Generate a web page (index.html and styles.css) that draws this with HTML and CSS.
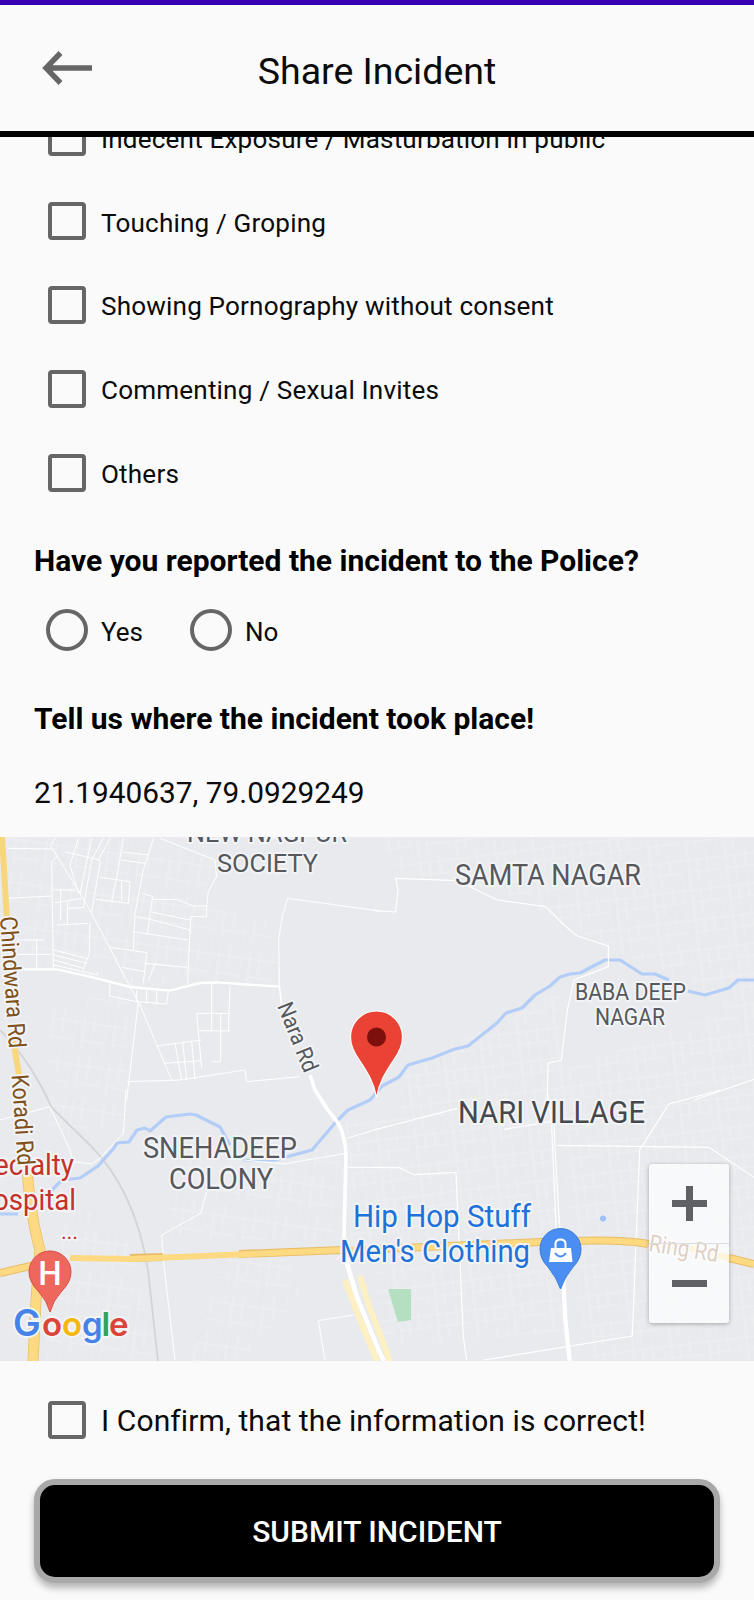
FILE: index.html
```html
<!DOCTYPE html>
<html lang="en">
<head>
<meta charset="utf-8">
<title>Share Incident</title>
<link rel="stylesheet" href="styles.css">
</head>
<body>
<header class="appbar">
  <svg class="back" viewBox="0 0 50 34" width="50" height="34"><path d="M50 17H4M18.500 2L4 17l14.500 15" fill="none" stroke="#666" stroke-width="5.400"/></svg>
  <h1 class="title"><span>Share Incident</span></h1>
</header>
<main class="form">
  <div class="options">
    <label class="row"><i class="box"></i><span>Indecent Exposure / Masturbation in public</span></label>
    <label class="row"><i class="box"></i><span>Touching / Groping</span></label>
    <label class="row"><i class="box"></i><span>Showing Pornography without consent</span></label>
    <label class="row"><i class="box"></i><span>Commenting / Sexual Invites</span></label>
    <label class="row"><i class="box"></i><span>Others</span></label>
  </div>
  <h2 class="question police">Have you reported the incident to the Police?</h2>
  <div class="radios">
    <label class="choice"><i class="dot"></i><span>Yes</span></label>
    <label class="choice"><i class="dot"></i><span>No</span></label>
  </div>
  <h2 class="question place">Tell us where the incident took place!</h2>
  <p class="coords">21.1940637, 79.0929249</p>
</main>
<section class="map">
<svg class="tiles" viewBox="0 837 754 524" width="754" height="524">
  <defs>
    <pattern id="g1" width="31" height="43" patternUnits="userSpaceOnUse" patternTransform="rotate(8)"><path d="M0 0V43M9 4V38M19 0V25M0 12H31M9 30H31" stroke="#f2f3f5" stroke-width=".9" fill="none"/></pattern>
    <pattern id="g2" width="38" height="30" patternUnits="userSpaceOnUse" patternTransform="rotate(-7)"><path d="M0 0V30M8 0V30M17 8V30M27 0V20M0 8H38M8 20H38" stroke="#f1f2f4" stroke-width=".9" fill="none"/></pattern>
  </defs>
  <rect y="837" width="754" height="524" fill="#e8eaed"/>
  <path fill="url(#g1)" opacity=".75" d="M0 837H215V870L200 900V985L130 990 50 965 0 970ZM200 905L280 925V985H195ZM50 1000L130 990 125 1120 50 1140ZM230 1130L340 1155 335 1240 170 1240 165 1180ZM60 1190L130 1245 155 1361H45ZM225 1260H290L300 1300 240 1361H190Z"/>
  <path fill="url(#g2)" opacity=".75" d="M380 837H754V1030L690 980 610 950 570 925 500 890 400 875ZM400 1070L560 990 565 1070 754 1000V1360H590L560 1130 400 1130ZM345 1120L550 1110 560 1230 350 1240ZM375 1265H555L565 1330 385 1350ZM575 1260H640V1330H580Z"/>
  <g fill="none" stroke="#fff" stroke-width="3" transform="translate(0 830) scale(.33333)">
    <path stroke-width="7" d="M62 418L170 418 270 440 390 471 510 482 600 459 650 457 838 470"/>
    <path stroke-width="5" d="M838 468L845 525"/><path d="M838 470L836 325 848 255 863 205 1140 243"/>
    <path stroke-width="3" d="M150 45L240 190 275 250 390 470 420 525 515 750M165 22L155 45M25 55L155 57M155 95L160 415M155 95L172 78M25 205L155 198M50 330H130M50 373H155M110 330V415"/>
    <path d="M235 25L210 105 235 190M275 25L240 190M310 25L275 90 250 230M195 65L290 88Q305 90 300 105L275 245M330 25L295 90M160 180H225M165 218L245 205M170 285L265 280M182 180V270M202 215V285M205 235L255 232M270 280L268 370 250 420M162 360L260 385M162 375L260 400M162 390L250 415M162 405L295 435 290 425"/>
    <path d="M370 25L350 145 335 215M300 142L390 155 385 220 287 208M365 150V215M460 25L430 120 405 250 400 360M367 66L445 75M363 90L435 100M428 190L458 200 442 312M410 260L440 265 570 300M450 245L570 270M455 208L530 208 580 228H620V260H572L563 460M400 305L565 330M330 352L440 368 430 460M365 412L435 425M465 400L445 452M435 400L560 412M480 25L645 90 650 140 625 185 620 230"/>
    <path d="M330 460L328 498 410 515M410 480V515L500 522 505 485M440 480V520M470 482V520M415 515L380 810M635 460L635 600M690 470L685 603M590 550H690M590 550L605 715M662 550V695H635M597 602L690 603M470 648L605 630M492 700L605 692M525 640L545 750M548 635L560 750M575 635L585 748M380 755L540 750 735 720 740 755 900 740"/>
  </g>
  <g fill="none" stroke="#fff" transform="translate(374 830) scale(.33333)">
    <path d="M0 242L65 246 72 180 65 145 250 152 370 210 515 230 570 285 610 318 703 348V410L600 450 580 540 562 690 522 700 520 810M960 810L1140 748" stroke-width="3.500"/>
  </g>
  <path d="M0 1030Q30 1060 52 1108L90 1145Q135 1190 148 1270L158 1361" fill="none" stroke="#d2d4d7" stroke-width="1.800"/>
  <g fill="none" stroke="#b2cdf7" stroke-width="3.200" stroke-linejoin="round">
    <path d="M0 1214H18M52 1190L62 1180 80 1178 98 1166 114 1148 117 1143 129 1142 137 1130 145 1128 150 1131 166 1117 190 1114 196 1115 220 1127 230 1145M243 1160H275L312 1150 335 1123 348 1110 370 1100 382 1086 399 1077 408 1065 432 1058 455 1049 468 1046 497 1023 506 1013 522 1008 535 995 550 986 560 977 570 974 580 973 605 960H620L642 974H655L669 980M688 991L705 995 729 988 738 980 754 980"/>
  </g>
  <path d="M608.500 946V967" stroke="#fff" stroke-width="1.200"/>
  <g fill="none" stroke="#fff" transform="translate(0 1090) scale(.33333)">
    <path stroke-width="11" d="M930 -45L945 0 980 55 1015 100Q1038 145 1038 200L1032 440Q1035 525 1070 620L1140 790"/>
    <path stroke-width="3" d="M150 50L210 180 220 215 275 222 300 205 370 130 378 0M0 90L150 50M620 305L602 370 485 435 490 510 525 810M730 210L850 222 1040 190M1040 145L1140 115M1045 232H1140M1060 675L955 692 975 810M1045 475L1010 510"/>
  </g>
  <g fill="none" stroke="#fff" stroke-width="3.500" transform="translate(374 1090) scale(.33333)">
    <path d="M0 120L250 55M0 232L75 233 120 254 246 247 268 740 278 810M390 118L530 95M550 166L1005 172 1140 262M1040 0L885 42 797 180 775 738 330 810M520 0L533 105 547 430M538 60L545 210 558 430"/>
    <path stroke-width="13" d="M568 570L574 690 587 812"/>
  </g>
  <path d="M345 1280L360 1320 377 1361M360 1276L368 1303 390 1361" fill="none" stroke="#fdf0c3" stroke-width="6"/>
  <path d="M346 1260L357 1297 380 1353 384 1361" fill="none" stroke="#fff" stroke-width="4.500"/>
  <g fill="none" stroke="#f8d77c" stroke-width="6">
    <path d="M2 837L7 920M13 1040L20 1080"/>
    <path stroke="#e9bd67" stroke-width="11" d="M27 1170Q31 1218 40 1250L36 1300 33 1361"/>
    <path stroke="#fdd982" stroke-width="9.500" d="M27 1170Q31 1218 40 1250L36 1300 33 1361"/>
    <path stroke="#e9bd67" stroke-width="8" d="M0 1273L35 1265M130 1258L163 1257M239 1254L342 1250M380 1249L540 1242Q620 1238 648 1244M729 1258L754 1264"/>
    <path stroke="#fdd982" d="M0 1273L35 1265M70 1258L130 1259 342 1250 380 1249 540 1242Q620 1238 648 1244L690 1248 729 1258 754 1264"/>
  </g>
  <path d="M388 1289H411V1320L398 1322Z" fill="#b5dfc1"/><circle cx="603" cy="1218.500" r="3" fill="#9ebff5"/>
  <g class="label">
    <text x="187" y="842" font-size="26" textLength="160" lengthAdjust="spacingAndGlyphs">NEW NAGPUR</text>
    <text x="217" y="871.500" font-size="26.500" textLength="101" lengthAdjust="spacingAndGlyphs">SOCIETY</text>
    <text x="455" y="885" font-size="29" textLength="186" lengthAdjust="spacingAndGlyphs">SAMTA NAGAR</text>
    <text x="575" y="1000" font-size="23.500" textLength="111" lengthAdjust="spacingAndGlyphs">BABA DEEP</text>
    <text x="595" y="1025" font-size="23.500" textLength="70" lengthAdjust="spacingAndGlyphs">NAGAR</text>
    <text x="458" y="1123" font-size="30.500" textLength="187" lengthAdjust="spacingAndGlyphs" fill="#45484d">NARI VILLAGE</text>
    <text x="143" y="1157.500" font-size="29.500" textLength="154" lengthAdjust="spacingAndGlyphs">SNEHADEEP</text>
    <text x="169" y="1189" font-size="29.500" textLength="104" lengthAdjust="spacingAndGlyphs">COLONY</text>
    <text transform="translate(277 1006) rotate(68)" font-size="22.500" textLength="73" lengthAdjust="spacingAndGlyphs">Nara Rd</text>
    <g fill="#c5322c"><text x="-6" y="1174.500" font-size="30" textLength="80" lengthAdjust="spacingAndGlyphs">ecialty</text><text x="-7" y="1209.500" font-size="30" textLength="83" lengthAdjust="spacingAndGlyphs">ospital</text><text x="61" y="1239" font-size="22" textLength="17">...</text></g>
    <g fill="#805018">
      <text transform="translate(0 917) rotate(86)" font-size="24" textLength="132" lengthAdjust="spacingAndGlyphs">Chindwara Rd</text>
      <text transform="translate(11.500 1075) rotate(86)" font-size="24" textLength="91" lengthAdjust="spacingAndGlyphs">Koradi Rd</text>
    </g>
    <g fill="#2071d8"><text x="353" y="1227" font-size="30.500" textLength="178" lengthAdjust="spacingAndGlyphs">Hip Hop Stuff</text><text x="340" y="1262" font-size="30.500" textLength="190" lengthAdjust="spacingAndGlyphs">Men's Clothing</text></g>
    <text transform="translate(648 1251) rotate(9)" font-size="24" textLength="70" lengthAdjust="spacingAndGlyphs" fill="#8f6038">Ring Rd</text>
  </g>
  <path d="M50 1312Q47 1301 39 1292 29 1282 29 1272A21 21 0 0 1 71 1272Q71 1282 61 1292 53 1301 50 1312Z" fill="#ed675d" stroke="#d84c43"/>
  <text x="50" y="1285" font-size="33" font-weight="500" fill="#fff" text-anchor="middle">H</text>
  <path d="M560.500 1289Q557 1278 548 1267 540 1259 540 1249A20.500 20.500 0 0 1 581 1249Q581 1259 573 1267 564 1278 560.500 1289Z" fill="#4a8df3" stroke="#397bd8"/>
  <path d="M551 1248H571L572.500 1262H549Z" fill="#fff"/><path d="M555.500 1249V1244Q555.500 1239.500 560.500 1239.500T565.500 1244V1249" fill="none" stroke="#fff" stroke-width="2"/><path d="M555 1253Q560.500 1260 566 1253" fill="none" stroke="#4a8df3" stroke-width="2"/>
  <path d="M376.500 1097.500C374 1083 368 1073 360 1061 354 1053 350.500 1046 350.500 1037A26 26 0 0 1 402.500 1037C402.500 1046 399 1053 393 1061 385 1073 379 1083 376.500 1097.500Z" fill="#ea4335" stroke="#fff" stroke-width="1.200"/>
  <circle cx="376.500" cy="1037" r="9.500" fill="#7d100c"/>
  <text class="brand" y="1336" font-size="33"><tspan x="13" fill="#4583e9" font-size="37">G</tspan><tspan x="42" fill="#dc4439">o</tspan><tspan x="62" fill="#f3b70d">o</tspan><tspan x="82" fill="#4583e9">g</tspan><tspan x="101.500" fill="#34a355">l</tspan><tspan x="109" fill="#dc4439">e</tspan></text>
</svg>
<div class="zoom">
  <button class="zbtn" aria-label="Zoom in"><svg width="35" height="35"><path d="M17.500 0V35M0 17.500H35" stroke="#606164" stroke-width="7"/></svg></button>
  <button class="zbtn" aria-label="Zoom out"><svg width="35" height="35"><path d="M0 17.500H35" stroke="#606164" stroke-width="7"/></svg></button>
</div>
</section>
<footer class="finish">
  <label class="confirm"><i class="box"></i><span>I Confirm, that the information is correct!</span></label>
  <button class="submit"><span>SUBMIT INCIDENT</span></button>
</footer>
</body>
</html>
```
FILE: styles.css
```css
* { box-sizing: border-box; }
body { margin: 0; width: 754px; height: 1600px; overflow: hidden; background: #fafafa; color: #0b0b0b; font-family: Roboto, "Liberation Sans", sans-serif; }
h1, h2, p { margin: 0; white-space: nowrap; }
.appbar { display: grid; grid-template-columns: 200px 1fr 200px; height: 137px; border-top: 5px solid #3700b3; border-bottom: 6px solid #000; align-items: center; }
.back { margin: -1px 0 0 42px; }
.title { font-size: 37.5px; font-weight: 400; line-height: 44px; text-align: center; padding-top: 5px; }
.form { display: flex; flex-direction: column; height: 700px; overflow: hidden; }
.options { display: flex; flex-direction: column; margin-top: -41.5px; }
.row { display: flex; flex: none; align-items: center; height: 83.8px; padding-left: 48px; gap: 15px; font-size: 26.1px; letter-spacing: .17px; white-space: nowrap; }
.row span { padding-top: 3px; }
.box { flex: none; width: 38px; height: 38px; border: 4px solid #666; border-radius: 4px; }
.question { padding-left: 34px; font-size: 30px; font-weight: 700; line-height: 36px; color: #000; }
.police { margin-top: 29px; }
.radios { display: flex; gap: 47px; padding-left: 46px; margin-top: 30px; height: 42px; }
.choice { display: flex; align-items: center; gap: 13px; font-size: 26px; }
.choice span { padding-top: 4px; }
.dot { width: 42px; height: 42px; border: 4px solid #666; border-radius: 50%; }
.place { margin-top: 50px; }
.coords { margin-top: 38px; padding-left: 34px; font-size: 29.8px; line-height: 36px; }
.map { position: relative; height: 524px; }
.tiles { display: block; }
.label text { paint-order: stroke; stroke: #f3f4f6; stroke-width: 4px; stroke-linejoin: round; }
.label { fill: #55585d; }
.brand { font-family: Inter, sans-serif; font-weight: 600; paint-order: stroke; stroke: #f3f4f6; stroke-width: 4px; }
.zoom { position: absolute; top: 327px; left: 649px; width: 80px; height: 159px; display: flex; flex-direction: column; background: rgba(255, 255, 255, .7); border-radius: 3px; box-shadow: 0 1px 4px rgba(0, 0, 0, .3); }
.zbtn { flex: 1; display: flex; align-items: center; justify-content: center; border: 0; padding: 0; background: none; }
.zbtn + .zbtn { border-top: 1px solid #dcdddf; }
.confirm { display: flex; align-items: center; gap: 15px; height: 38px; padding-left: 48px; font-size: 30px; letter-spacing: .1px; white-space: nowrap; }
.confirm span { padding-top: 1px; }
.finish { display: flex; flex-direction: column; padding-top: 40px; }
.submit { margin: 40px 34px 0; height: 104px; border: 6px solid #a9a9a9; border-radius: 21px; background: #000; color: #fff; font: 500 30px Roboto, sans-serif; padding: 1px 0 0; box-shadow: 0 5px 7px rgba(0, 0, 0, .28); }
```
